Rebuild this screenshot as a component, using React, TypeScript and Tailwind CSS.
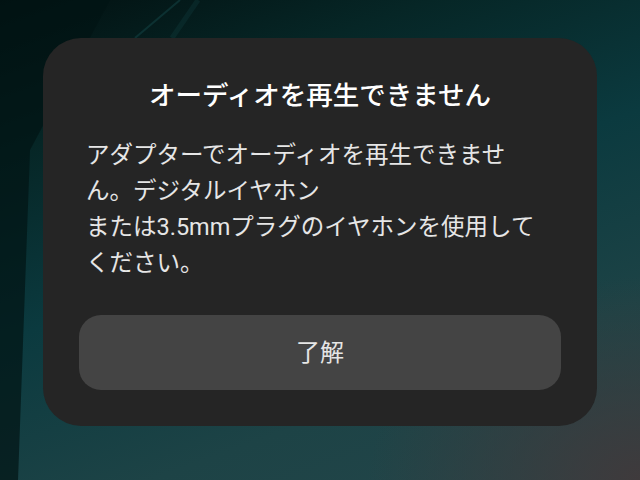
export default function App() {
  return (
    <div className="relative h-[480px] w-[640px] overflow-hidden bg-[radial-gradient(ellipse_at_100%_100%,#3f3a3c_0%,rgba(63,58,60,0)_30%),linear-gradient(160deg,#021010_0%,#062626_22%,#0b3a3f_48%,#1d4346_75%,#24464a_100%)] font-['Roboto','Noto_Sans_CJK_JP',sans-serif]">
      {/* wallpaper streaks */}
      <svg className="absolute inset-0" width="640" height="480" viewBox="0 0 640 480">
        <path d="M0 0 L110 0 L30 150 L18 480 L0 480 Z" fill="#021414" opacity="0.7" />
        <path d="M135 38 L180 0" stroke="#1b5a5c" strokeWidth="2" opacity="0.35" />
        <path d="M172 38 L198 0" stroke="#164a4c" strokeWidth="5" opacity="0.25" />
      </svg>

      <div className="relative pl-[43px] pt-[38px]">
        <div className="flex h-[388px] w-[554px] flex-col rounded-[38px] bg-[#252525] px-[36px] pt-[40px]">
          <h1 className="text-center text-[26.5px] font-medium leading-[36px] text-white">
            オーディオを再生できません
          </h1>
          <p className="mt-[23px] pl-[7px] text-[23.5px] leading-[36px] text-[#e6e6e6]">
            アダプターでオーディオを再生できませ
            <br />
            ん。デジタルイヤホン
            <br />
            または3.5mmプラグのイヤホンを使用して
            <br />
            ください。
          </p>
          <button className="mt-[34px] flex h-[75px] w-full items-center justify-center rounded-[22px] bg-[#444444] text-[24px] text-[#e6e6e6]">
            了解
          </button>
        </div>
      </div>
    </div>
  );
}
